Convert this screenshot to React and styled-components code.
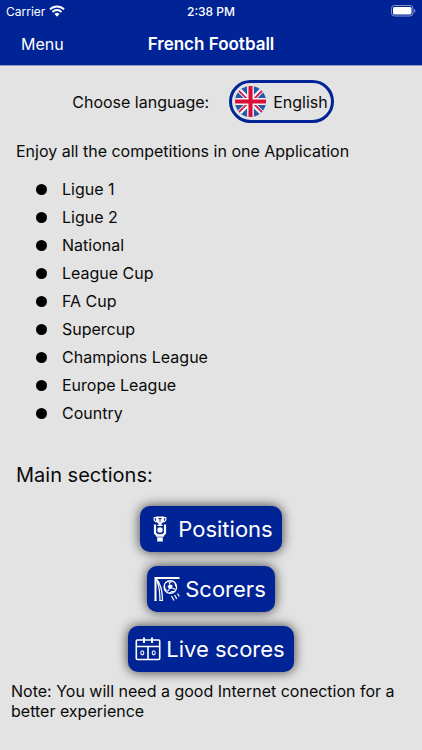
import React from "react";
import styled, { createGlobalStyle } from "styled-components";

const GlobalStyle = createGlobalStyle`
  *, *::before, *::after { box-sizing: border-box; }
  body {
    margin: 0;
    background: #e3e3e3;
    color: #0a0a0a;
    font-family: Inter, "Liberation Sans", sans-serif;
    font-size: 16px;
  }
  button { font-family: inherit; cursor: pointer; }
`;

const Header = styled.header`
  background: #002395;
  color: #fff;
  border-bottom: 1px solid #8f9bc4;
`;

const StatusBar = styled.div`
  display: grid;
  grid-template-columns: 1fr auto 1fr;
  align-items: center;
  height: 22px;
  padding: 0 6px;
  font-size: 12px;
`;

const Carrier = styled.div`
  display: flex;
  align-items: center;
  gap: 4px;
`;

const Clock = styled.time`
  font-weight: 500;
`;

const BatteryIcon = styled.svg`
  justify-self: end;
`;

const NavBar = styled.nav`
  display: grid;
  grid-template-columns: 1fr auto 1fr;
  align-items: center;
  height: 43px;
  padding: 0 21px;
`;

const MenuButton = styled.button`
  justify-self: start;
  padding: 0;
  border: 0;
  background: none;
  color: inherit;
  font-size: 16px;
`;

const Title = styled.h1`
  margin: 0;
  font-size: 17px;
  font-weight: 600;
  line-height: 20px;
`;

const Content = styled.main`
  padding: 14px 16px;
`;

const LanguageRow = styled.div`
  display: flex;
  align-items: center;
  justify-content: center;
  gap: 20px;
  padding-right: 16px;
`;

const LanguageButton = styled.button`
  display: flex;
  align-items: center;
  gap: 7px;
  height: 43px;
  padding: 0 3px;
  border: 3px solid #002395;
  border-radius: 22px;
  background: transparent;
  color: inherit;
  font-size: 16px;
`;

const Intro = styled.p`
  margin: 18px 0 14px;
  line-height: 20px;
`;

const CompetitionList = styled.ul`
  margin: 0;
  padding: 0 0 0 20px;
  list-style: none;
`;

const Competition = styled.li`
  display: flex;
  align-items: center;
  gap: 15px;
  line-height: 28px;

  &::before {
    content: "";
    width: 11px;
    height: 11px;
    border-radius: 50%;
    background: #000;
  }
`;

const SectionHeading = styled.h2`
  margin: 34px 0 17px;
  font-size: 20px;
  font-weight: 400;
  line-height: 28px;
`;

const SectionButtons = styled.div`
  display: flex;
  flex-direction: column;
  align-items: center;
  gap: 14px;
`;

const SectionButton = styled.button`
  display: flex;
  align-items: center;
  gap: 5px;
  height: 46px;
  padding: 0 9px 0 7px;
  border: 0;
  border-radius: 10px;
  background: #002395;
  box-shadow: 0 0 12px rgba(0, 0, 0, 0.75);
  color: #fff;
  font-size: 22px;
`;

const Note = styled.p`
  margin: 9px -5px 0;
  line-height: 20px;
`;

function Wifi() {
  return (
    <svg width="16" height="12" viewBox="0 0 16 12" aria-hidden="true" fill="none" stroke="#fff" strokeWidth="2">
      <path d="M1 4.4a10 10 0 0 1 14 0M3.5 7a6.3 6.3 0 0 1 9 0" />
      <path d="M8 11.7 5.5 9.1a3.5 3.5 0 0 1 5 0Z" fill="#fff" stroke="none" />
    </svg>
  );
}

function Battery() {
  return (
    <BatteryIcon width="25" height="12" viewBox="0 0 25 12" role="img" aria-label="Battery full">
      <rect x=".5" y=".5" width="21.5" height="10.5" rx="3" fill="none" stroke="#8794cb" />
      <rect x="2" y="2" width="18.5" height="7.5" rx="1.5" fill="#fff" />
      <path d="M23.2 4v4c1.6-.7 1.6-3.3 0-4Z" fill="#8794cb" />
    </BatteryIcon>
  );
}

function BritishFlag() {
  return (
    <svg width="31" height="31" viewBox="0 0 32 32" aria-hidden="true">
      <clipPath id="flag-disc"><circle cx="16" cy="16" r="16" /></clipPath>
      <g clipPath="url(#flag-disc)">
        <path fill="#2458a8" d="M0 0h32v32H0z" />
        <path d="m0 0 32 32M32 0 0 32" stroke="#f5f3f5" strokeWidth="5" />
        <path d="m0 1 15 15M17 16l15 15M32 1 17 16M15 16 0 31" stroke="#d41440" strokeWidth="1.8" />
        <path d="M16 0v32M0 16h32" stroke="#f5f3f5" strokeWidth="7" />
        <path d="M16 0v32M0 16h32" stroke="#d90d36" strokeWidth="4.2" />
      </g>
    </svg>
  );
}

function TrophyIcon() {
  return (
    <svg width="26" height="26" viewBox="0 0 26 26" aria-hidden="true" fill="none" stroke="#fff">
      <path d="M9 1h8l-.7 4.500-2.200 2h-2.200L9.700 5.500Z" fill="#fff" />
      <path d="M9.500 1.500H7.300c-.8 2.500.5 4.300 2.700 4.300M16.500 1.500h2.200c.8 2.500-.5 4.300-2.700 4.300" strokeWidth="1.200" />
      <path d="M11.300 2.600h3.400M13 2.600v3.400" stroke="#002395" strokeWidth=".9" />
      <path d="M13 7v3M10.500 9.300h5" strokeWidth="1.600" />
      <circle cx="13" cy="14" r="2.700" fill="#fff" stroke="none" />
      <path d="M8 8.500v8.500l2.800 3M18 8.500v8.500L15.200 20" strokeWidth="2.200" />
      <path d="m9.500 17.500 2 .8h3l2-.8V21h-.7v4.500h-5.600V21h-.7Z" fill="#fff" stroke="none" />
      <path d="M10.200 21h5.600" stroke="#002395" strokeWidth=".6" />
    </svg>
  );
}

function GoalIcon() {
  return (
    <svg width="26" height="26" viewBox="0 0 26 26" aria-hidden="true" fill="none" stroke="#fff">
      <path d="M1.500 25V2H25.500" strokeWidth="2" />
      <path d="M2.500 3c4.500 5 6 12 6 22M2.500 4c2.500 5 3.500 12 3.500 21" strokeWidth="1.200" />
      <path d="M.5 24.500h2M5.500 24.500h3.500" strokeWidth="1.200" />
      <circle cx="16.300" cy="11" r="6.300" strokeWidth="1.200" />
      <path d="m15.500 8.300 3 1-.2 3-3 1-1.800-2.700Z" fill="#fff" stroke="none" />
      <path d="m13.500 5.500 3 .7 2.500-1M21 7l1 3.500M10.500 9l.2 3.500 1.800 2M15.500 17l2.500-1.500 2 0M15.500 8.300V6M18.300 12.300l3 1M15.300 13.300l-2 2" strokeWidth="1.200" />
      <path d="m17.500 20 2.500 4.500M20.700 19l2 4M23.500 17.500l1.700 3" strokeWidth="1.200" />
    </svg>
  );
}

function ScoreboardIcon() {
  return (
    <svg width="26" height="26" viewBox="0 0 26 26" aria-hidden="true" fill="none" stroke="#fff">
      <rect x="1.300" y="4" width="23.400" height="19.500" rx="1" strokeWidth="1.600" />
      <path d="M2 10.500h22M13 11v12" strokeWidth="1.600" />
      <path d="M9 1.500v5.500M17 1.500v5.500" strokeWidth="1.900" />
      <ellipse cx="7.300" cy="16.800" rx="1.500" ry="2.100" strokeWidth="1.100" />
      <ellipse cx="18.700" cy="16.800" rx="1.500" ry="2.100" strokeWidth="1.100" />
    </svg>
  );
}

const competitions = [
  "Ligue 1",
  "Ligue 2",
  "National",
  "League Cup",
  "FA Cup",
  "Supercup",
  "Champions League",
  "Europe League",
  "Country",
];

const sections = [
  { label: "Positions", Icon: TrophyIcon },
  { label: "Scorers", Icon: GoalIcon },
  { label: "Live scores", Icon: ScoreboardIcon },
];

export default function App() {
  return (
    <>
      <GlobalStyle />
      <Header>
        <StatusBar>
          <Carrier>Carrier <Wifi /></Carrier>
          <Clock>2:38 PM</Clock>
          <Battery />
        </StatusBar>
        <NavBar>
          <MenuButton type="button">Menu</MenuButton>
          <Title>French Football</Title>
        </NavBar>
      </Header>
      <Content>
        <LanguageRow>
          <label htmlFor="language">Choose language:</label>
          <LanguageButton id="language" type="button">
            <BritishFlag />
            English
          </LanguageButton>
        </LanguageRow>
        <Intro>Enjoy all the competitions in one Application</Intro>
        <CompetitionList>
          {competitions.map((name) => (
            <Competition key={name}>{name}</Competition>
          ))}
        </CompetitionList>
        <SectionHeading>Main sections:</SectionHeading>
        <SectionButtons>
          {sections.map(({ label, Icon }) => (
            <SectionButton key={label} type="button">
              <Icon />
              {label}
            </SectionButton>
          ))}
        </SectionButtons>
        <Note>Note: You will need a good Internet conection for a better experience</Note>
      </Content>
    </>
  );
}
